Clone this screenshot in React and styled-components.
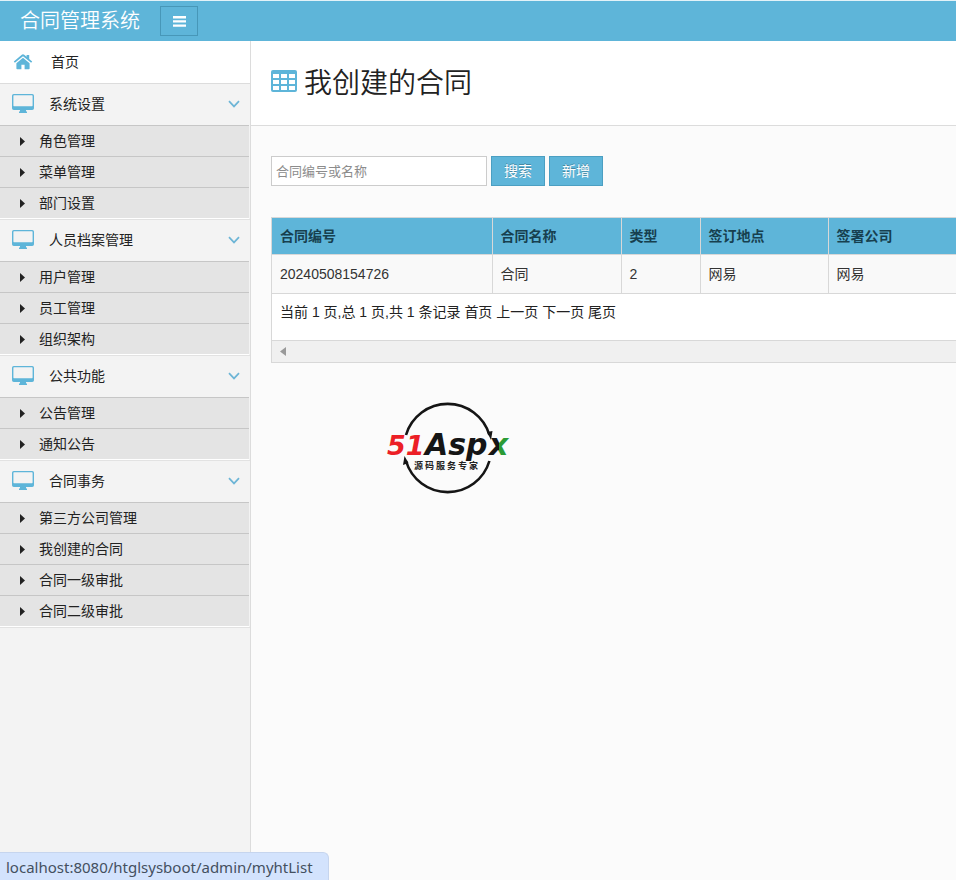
import React, { useState } from "react"
import styled, { createGlobalStyle } from "styled-components"

const GlobalStyle = createGlobalStyle`
  * {
    box-sizing: border-box;
  }
  body {
    margin: 0;
    background: #fbfbfb;
    color: #222;
    font-family: "Liberation Sans", "Noto Sans CJK SC", sans-serif;
    font-size: 14px;
    line-height: 20px;
  }
  ul {
    list-style: none;
    margin: 0;
    padding: 0;
  }
  a {
    color: inherit;
    text-decoration: none;
  }
`

const Page = styled.div`
  display: flex;
  flex-direction: column;
  min-height: 100vh;
  overflow: hidden;
`

const Header = styled.header`
  display: flex;
  align-items: center;
  gap: 20px;
  height: 41px;
  padding: 0 20px;
  border-top: 1px solid #e3f2f8;
  background: #5eb5d9;
`

const Brand = styled.a`
  color: #fff;
  font-size: 20px;
  font-weight: 350;
  line-height: 22px;
`

const MenuToggle = styled.button`
  display: flex;
  align-items: center;
  justify-content: center;
  width: 38px;
  height: 30px;
  padding: 0;
  border: 1px solid #4797b8;
  background: #5eb5d9;
  color: #fff;
`

const Body = styled.div`
  display: flex;
  flex: 1;
`

const Sidebar = styled.nav`
  flex: none;
  width: 251px;
  border-right: 1px solid #dcdcdc;
  background: #f3f3f3;
`

const HomeLink = styled.a`
  display: flex;
  align-items: center;
  gap: 18px;
  height: 43px;
  padding-left: 13px;
  border-bottom: 1px solid #dcdcdc;
  background: #fff;
`

const Group = styled.li`
  border-bottom: 1px solid #e2e2e2;
`

const GroupButton = styled.button`
  display: flex;
  align-items: center;
  gap: 15px;
  width: 100%;
  height: 41px;
  padding: 0 10px 2px 12px;
  border: 0;
  background: #f3f3f3;
  color: inherit;
  font: inherit;
  text-align: left;

  span {
    flex: 1;
  }
`

const SubMenu = styled.ul`
  margin-right: 1px;
  border-bottom: 1px solid #fff;
`

const SubLink = styled.a`
  display: flex;
  align-items: center;
  gap: 14px;
  height: 31px;
  padding-left: 20px;
  border-top: 1px solid #c6c6c6;
  background: #e4e4e4;
`

const Main = styled.main`
  flex: 1;
  min-width: 0;
`

const TitleBar = styled.div`
  display: flex;
  align-items: center;
  height: 85px;
  padding: 2px 20px 0;
  border-bottom: 1px solid #dcdcdc;
  background: #fff;
`

const Title = styled.h1`
  display: flex;
  align-items: center;
  gap: 7px;
  margin: 0;
  font-size: 28px;
  font-weight: 350;
  line-height: 42px;

  svg {
    margin-bottom: 6px;
  }
`

const Content = styled.div`
  padding: 30px 0 0 20px;
`

const SearchForm = styled.form`
  display: flex;
  gap: 4px;
  margin-bottom: 31px;
`

const SearchInput = styled.input`
  width: 216px;
  height: 30px;
  padding: 0 4px;
  border: 1px solid #ccc;
  background: #fff;
  font: inherit;
  font-size: 13px;

  &::placeholder {
    color: #8c8c8c;
  }
`

const Button = styled.button`
  width: 54px;
  height: 30px;
  padding: 0;
  border: 1px solid #4b9fc2;
  background: #5eb5d9;
  color: #fff;
  font: inherit;
  text-shadow: 0 -1px 0 rgba(0, 0, 0, 0.25);
`

const Panel = styled.section`
  overflow: hidden;
  border: solid #d8d8d8;
  border-width: 1px 0 1px 1px;
  background: #fff;
`

const Table = styled.table`
  table-layout: fixed;
  width: 100%;
  border-collapse: collapse;

  th,
  td {
    padding: 8px;
    border-bottom: 1px solid #d8d8d8;
    text-align: left;
    white-space: nowrap;
  }
  th + th,
  td + td {
    border-left: 1px solid #d8d8d8;
  }
  th {
    background: #5eb5d9;
    color: #17404f;
  }
  td {
    height: 39px;
    background: #f9f9f9;
    color: #333;
  }
`

const Pager = styled.div`
  height: 46px;
  padding: 8px;
`

const ScrollTrack = styled.div`
  display: flex;
  align-items: center;
  height: 22px;
  padding-left: 8px;
  border-top: 1px solid #d8d8d8;
  background: #f0f0f0;
`

const LogoBox = styled.div`
  margin: 35px 0 0 113px;
`

const StatusBar = styled.div`
  position: fixed;
  bottom: 0;
  left: 0;
  height: 28px;
  padding: 2px 15px 0 6px;
  border: solid #c6d5ee;
  border-width: 1px 1px 0 0;
  border-radius: 0 6px 0 0;
  background: #d3e3fd;
  color: #44505f;
  font-family: "Noto Sans", sans-serif;
  font-size: 15px;
  line-height: 25px;
`

const MenuIcon = () => (
  <svg width="13" height="11" viewBox="0 0 13 11" fill="currentColor">
    <path d="M0 0h13v2.4H0zM0 4.2h13v2.4H0zM0 8.4h13v2.4H0z" />
  </svg>
)

const HomeIcon = () => (
  <svg width="20" height="16" viewBox="0 0 20 16" fill="#5eb5d9">
    <path d="M10 3.8 16.6 9.3V14.4Q16.6 15.2 15.8 15.2H11.6V10.8H8.4V15.2H4.2Q3.4 15.2 3.4 14.4V9.3Z" />
    <path d="M10 .3Q10.7.3 11.2.8L13.6 2.8V1H16.2V5L19.2 7.500 18.1 8.800 10 2.300 1.900 8.800.8 7.500 8.800.8Q9.300.3 10 .3Z" />
  </svg>
)

const DesktopIcon = () => (
  <svg width="22" height="20" viewBox="0 0 22 20">
    <path
      fill="#5eb5d9"
      fillRule="evenodd"
      d="M1.8 0H20.2Q22 0 22 1.8V14.2Q22 16 20.2 16H14V17.2Q15 17.4 15 18V19H7V18Q7 17.4 8 17.2V16H1.8Q0 16 0 14.2V1.8Q0 0 1.8 0ZM2 1.3Q1.4 1.3 1.4 2V11.6Q1.4 12.2 2 12.2H20Q20.6 12.2 20.6 11.6V2Q20.6 1.3 20 1.3Z"
    />
  </svg>
)

const ChevronIcon = () => (
  <svg width="12" height="8" viewBox="0 0 12 8">
    <path d="M1 1.2 6 6.4 11 1.2" fill="none" stroke="#6db5d6" strokeWidth="1.7" />
  </svg>
)

const CaretIcon = () => (
  <svg width="5" height="9" viewBox="0 0 5 9">
    <path d="M0 0 5 4.5 0 9Z" fill="#222" />
  </svg>
)

const TableIcon = () => (
  <svg width="26" height="22" viewBox="0 0 26 22">
    <rect width="26" height="22" rx="2" fill="#5eb5d9" />
    <g fill="#fff">
      <path d="M2 4h6v4H2zM10 4h6v4h-6zM18 4h6v4h-6z" />
      <path d="M2 10h6v4H2zM10 10h6v4h-6zM18 10h6v4h-6z" />
      <path d="M2 16h6v4H2zM10 16h6v4h-6zM18 16h6v4h-6z" />
    </g>
  </svg>
)

const ScrollArrow = () => (
  <svg width="6" height="9" viewBox="0 0 6 9">
    <path d="M6 0 0 4.5 6 9Z" fill="#999" />
  </svg>
)

const Logo = () => (
  <svg width="132" height="98" viewBox="0 0 132 98">
    <defs>
      <linearGradient id="tail">
        <stop offset="0.52" stopColor="#151515" />
        <stop offset="0.52" stopColor="#2b9b36" />
      </linearGradient>
    </defs>
    <g fill="none" stroke="#151515" strokeWidth="2.6">
      <path d="M22 37A43.5 43.5 0 0 1 105.4 37" />
      <path d="M22 63A43.5 43.5 0 0 0 105.4 63" />
    </g>
    <path d="M103 34 108.5 33 107 42Z M24.5 65 19 67 20.5 58Z" fill="#151515" />
    <g
      fontFamily="DejaVu Sans, sans-serif"
      fontWeight="700"
      fontStyle="italic"
    >
      <text x="3" y="57" fontSize="27" fill="#ec1f26">
        51
      </text>
      <text x="41" y="57" fontSize="30" fill="#151515">
        Asp
      </text>
      <text x="105" y="57" fontSize="30" fill="url(#tail)">
        x
      </text>
    </g>
    <g
      fontFamily="Liberation Sans, Noto Sans CJK SC, sans-serif"
      fontSize="9"
      fontWeight="700"
      fill="#222"
    >
      {["源", "码", "服", "务", "专", "家"].map((char, i) => (
        <text key={char} x={30 + i * 11} y="71">
          {char}
        </text>
      ))}
    </g>
  </svg>
)

const groups = [
  { name: "系统设置", items: ["角色管理", "菜单管理", "部门设置"] },
  { name: "人员档案管理", items: ["用户管理", "员工管理", "组织架构"] },
  { name: "公共功能", items: ["公告管理", "通知公告"] },
  {
    name: "合同事务",
    items: ["第三方公司管理", "我创建的合同", "合同一级审批", "合同二级审批"],
  },
]

function MenuGroup({ name, items }) {
  const [open, setOpen] = useState(true)
  return (
    <Group>
      <GroupButton
        type="button"
        aria-expanded={open}
        onClick={() => setOpen(!open)}
      >
        <DesktopIcon />
        <span>{name}</span>
        <ChevronIcon />
      </GroupButton>
      {open && (
        <SubMenu>
          {items.map(item => (
            <li key={item}>
              <SubLink href="#">
                <CaretIcon />
                {item}
              </SubLink>
            </li>
          ))}
        </SubMenu>
      )}
    </Group>
  )
}

function ContractTable() {
  return (
    <Table>
      <colgroup>
        <col width="220" />
        <col width="129" />
        <col width="79" />
        <col width="128" />
        <col />
      </colgroup>
      <thead>
        <tr>
          <th>合同编号</th>
          <th>合同名称</th>
          <th>类型</th>
          <th>签订地点</th>
          <th>签署公司</th>
        </tr>
      </thead>
      <tbody>
        <tr>
          <td>20240508154726</td>
          <td>合同</td>
          <td>2</td>
          <td>网易</td>
          <td>网易</td>
        </tr>
      </tbody>
    </Table>
  )
}

function App() {
  const [showMenu, setShowMenu] = useState(true)
  return (
    <Page>
      <GlobalStyle />
      <Header>
        <Brand href="#">合同管理系统</Brand>
        <MenuToggle
          type="button"
          aria-label="菜单"
          onClick={() => setShowMenu(!showMenu)}
        >
          <MenuIcon />
        </MenuToggle>
      </Header>
      <Body>
        {showMenu && (
          <Sidebar>
            <HomeLink href="#">
              <HomeIcon />
              首页
            </HomeLink>
            <ul>
              {groups.map(group => (
                <MenuGroup key={group.name} {...group} />
              ))}
            </ul>
          </Sidebar>
        )}
        <Main>
          <TitleBar>
            <Title>
              <TableIcon />
              我创建的合同
            </Title>
          </TitleBar>
          <Content>
            <SearchForm onSubmit={e => e.preventDefault()}>
              <SearchInput
                type="text"
                aria-label="合同编号或名称"
                placeholder="合同编号或名称"
              />
              <Button type="submit">搜索</Button>
              <Button type="button">新增</Button>
            </SearchForm>
            <Panel>
              <ContractTable />
              <Pager>
                当前 1 页,总 1 页,共 1 条记录 <a href="#">首页</a>{" "}
                <a href="#">上一页</a> <a href="#">下一页</a>{" "}
                <a href="#">尾页</a>
              </Pager>
              <ScrollTrack>
                <ScrollArrow />
              </ScrollTrack>
            </Panel>
            <LogoBox>
              <Logo />
            </LogoBox>
          </Content>
        </Main>
      </Body>
      <StatusBar>localhost:8080/htglsysboot/admin/myhtList</StatusBar>
    </Page>
  )
}

export default App
